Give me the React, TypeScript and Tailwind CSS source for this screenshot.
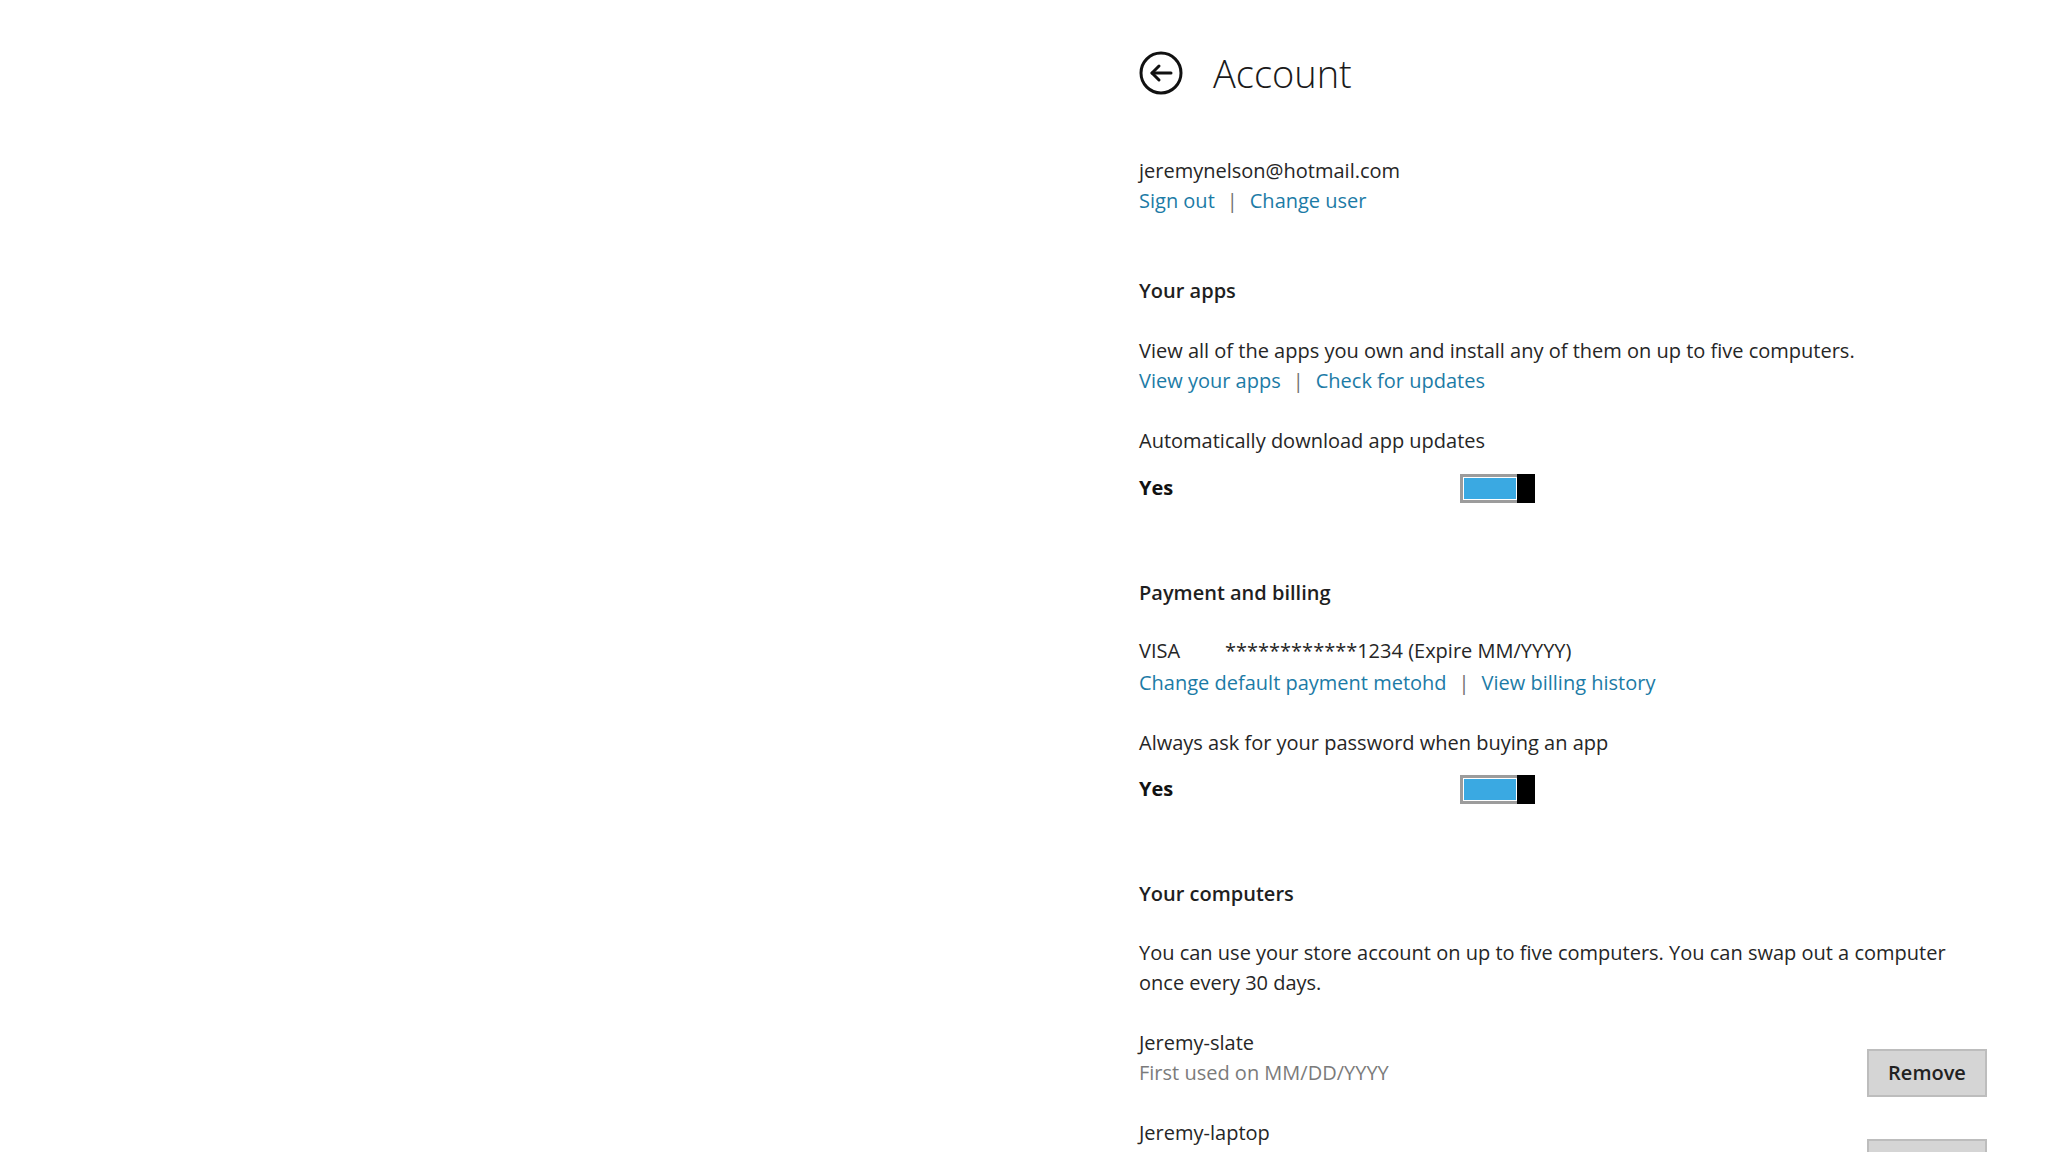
import React from "react";

const linkCls = "text-[#1c7ba6]";

function Sep() {
  return <span className="mx-[12px] text-[#6e6e6e]">|</span>;
}

function Toggle() {
  return (
    <div className="flex h-[29px] w-[75px]">
      <div className="flex flex-1 border-[3px] border-r-0 border-[#9c9c9c] bg-white p-px">
        <div className="flex-1 bg-[#3aa9e2]" />
      </div>
      <div className="w-[18px] bg-black" />
    </div>
  );
}

function BackIcon() {
  return (
    <svg width="44" height="44" viewBox="0 0 44 44" fill="none" stroke="#111" strokeWidth="3">
      <circle cx="22" cy="22" r="20" />
      <path d="M32 22H13" strokeLinecap="round" />
      <path d="M20 15l-7 7 7 7" strokeLinecap="round" strokeLinejoin="round" />
    </svg>
  );
}

function Computer({ name, first }: { name: string; first?: string }) {
  return (
    <div className="mt-[30px] flex h-[60px] items-start justify-between">
      <div>
        <div>{name}</div>
        {first && <div className="text-[#7b7b7b]">{first}</div>}
      </div>
      <button className="mt-[21px] h-[48px] w-[120px] shrink-0 border-2 border-[#bdbdbd] bg-[#d5d5d5] font-semibold text-[#222]">
        Remove
      </button>
    </div>
  );
}

export default function App() {
  return (
    <div className="flex h-[1152px] w-full overflow-hidden bg-white text-[20px] leading-[30px] text-[#262626] [font-family:'Open_Sans',sans-serif]">
      <div className="w-[1139px] shrink-0" />
      <div className="w-[848px] pt-[51px]">
        <div className="flex items-center gap-[30px]">
          <BackIcon />
          <h1 className="text-[38px] font-light leading-[44px] text-[#1a1a1a]">Account</h1>
        </div>

        <div className="mt-[61px]">jeremynelson@hotmail.com</div>
        <div>
          <span className={linkCls}>Sign out</span>
          <Sep />
          <span className={linkCls}>Change user</span>
        </div>

        <h2 className="mt-[60px] font-semibold text-[#1f1f1f]">Your apps</h2>
        <div className="mt-[30px]">View all of the apps you own and install any of them on up to five computers.</div>
        <div>
          <span className={linkCls}>View your apps</span>
          <Sep />
          <span className={linkCls}>Check for updates</span>
        </div>
        <div className="mt-[30px]">Automatically download app updates</div>
        <div className="mt-[17px] flex items-center">
          <span className="w-[321px] font-bold text-[#111]">Yes</span>
          <Toggle />
        </div>

        <h2 className="mt-[75px] font-semibold text-[#1f1f1f]">Payment and billing</h2>
        <div className="mt-[28px] flex">
          <span className="w-[86px]">VISA</span>
          <span>************1234 (Expire MM/YYYY)</span>
        </div>
        <div className="mt-[2px]">
          <span className={linkCls}>Change default payment metohd</span>
          <Sep />
          <span className={linkCls}>View billing history</span>
        </div>
        <div className="mt-[30px]">Always ask for your password when buying an app</div>
        <div className="mt-[16px] flex items-center">
          <span className="w-[321px] font-bold text-[#111]">Yes</span>
          <Toggle />
        </div>

        <h2 className="mt-[75px] font-semibold text-[#1f1f1f]">Your computers</h2>
        <div className="mt-[29px]">
          You can use your store account on up to five computers. You can swap out a computer once every 30 days.
        </div>
        <Computer name="Jeremy-slate" first="First used on MM/DD/YYYY" />
        <Computer name="Jeremy-laptop" first="First used on MM/DD/YYYY" />
      </div>
    </div>
  );
}
